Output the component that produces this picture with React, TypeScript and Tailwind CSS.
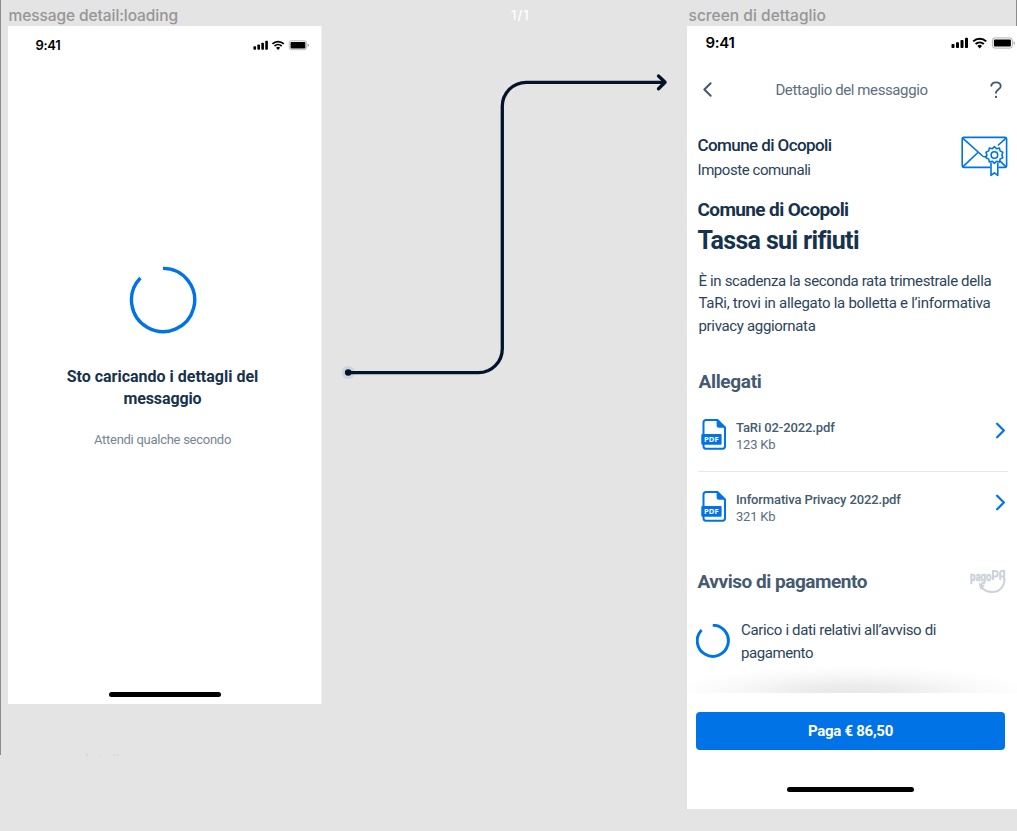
import { ChevronLeft, ChevronRight } from "lucide-react";

function StatusIcons({ className }: { className: string }) {
  return (
    <svg viewBox="0 0 64 12" className={className} fill="#000">
      <rect x="0.5" y="7" width="3" height="4" rx="0.8" />
      <rect x="5" y="5.2" width="3" height="5.8" rx="0.8" />
      <rect x="9.5" y="3" width="3" height="8" rx="0.8" />
      <rect x="14" y="0.8" width="3" height="10.2" rx="0.8" />
      <g fill="none" stroke="#000" strokeWidth="2">
        <path d="M22.2 4.4a9.4 9.4 0 0 1 13 0" />
        <path d="M24.6 7a6 6 0 0 1 8.2 0" />
      </g>
      <path d="M26.4 8.9a3.4 3.4 0 0 1 4.6 0L28.7 11.4z" />
      <rect x="41.4" y="0.9" width="20" height="10.2" rx="2.6" fill="none" stroke="#000" strokeOpacity="0.3" />
      <rect x="42.9" y="2.4" width="17" height="7.2" rx="1" />
      <path d="M62.6 4.2v3.6a1.9 1.9 0 0 0 0-3.6z" opacity="0.4" />
    </svg>
  );
}

function Spinner({ className, strokeWidth }: { className: string; strokeWidth: number }) {
  return (
    <svg viewBox="0 0 68 68" className={className} fill="none" stroke="#0073e6" strokeWidth={strokeWidth}>
      <path d="M34 2.4A31.6 31.6 0 1 1 11.4 12" />
    </svg>
  );
}

function PdfIcon() {
  return (
    <svg viewBox="0 0 26 31" className="mt-[19px] h-[31px] w-[26px] shrink-0">
      <path
        d="M16.5 1H4.9A2.4 2.4 0 0 0 2.5 3.4v23.9a2.4 2.4 0 0 0 2.4 2.4h16.7a2.4 2.4 0 0 0 2.4-2.4V8.5z"
        fill="#fff"
        stroke="#0073e6"
        strokeWidth="2"
      />
      <path d="M15.6 0.2L25 8.8h-7a2.4 2.4 0 0 1-2.4-2.4z" fill="#0073e6" />
      <rect x="0.3" y="15" width="20.3" height="10.8" rx="1" fill="#0073e6" />
      <text x="3" y="23.1" fontSize="7.4" fontWeight="700" textLength="14.6" lengthAdjust="spacingAndGlyphs" fill="#fff" className="font-['Open_Sans',sans-serif]">
        PDF
      </text>
    </svg>
  );
}

function EnvelopeIcon() {
  return (
    <svg
      viewBox="0 0 48 42"
      className="mt-0.5 h-[42px] w-[48px]"
      fill="none"
      stroke="#0073e6"
      strokeWidth="1.6"
      strokeLinejoin="round"
      strokeLinecap="round"
    >
      <path d="M30 32.4H3.8A1.6 1.6 0 0 1 2.2 30.8V4A1.6 1.6 0 0 1 3.8 2.4h41.2A1.6 1.6 0 0 1 46.6 4v26.8a1.6 1.6 0 0 1-1.6 1.6h-6" />
      <path d="M2.7 3.2l19.9 17.8q1.8 1.5 4 .2M46 3.2l-7.6 6.8M2.8 31.8l15.1-14.3M46 31.8l-5.6-5.4" />
      <path d="M34.4 11.6l2.1 2.1 2.9-.7.7 2.9 2.7 1.3-.9 2.8.9 2.8-2.7 1.3-.7 2.9-2.9-.7-2.1 2.1-2.1-2.1-2.9.7-.7-2.9-2.7-1.3.9-2.8-.9-2.8 2.7-1.3.7-2.9 2.9.7z" fill="#fff" />
      <circle cx="34.4" cy="20" r="3.3" />
      <path d="M31 28v12.4l3.4-2.5 3.4 2.5V28" />
    </svg>
  );
}

function PagoPaLogo() {
  return (
    <svg viewBox="0 0 37 25" className="h-[25px] w-[37px]">
      <text
        x="1"
        y="11.5"
        fontSize="12.5"
        fontWeight="800"
        textLength="21.5"
        lengthAdjust="spacingAndGlyphs"
        fill="#cbd3db"
        stroke="#cbd3db"
        strokeWidth="0.4"
        className="font-['Roboto',sans-serif]"
      >
        pago
      </text>
      <g fill="none" stroke="#cbd3db" strokeWidth="2">
        <path d="M24 11V2h2.6q2 0 2 2v1.4q0 2-2 2H24M31.2 11V4q0-2 2-2h2v9M31.2 7.4h4" />
        <path d="M35.4 9.500c.4 8.500-5.400 13.500-12.400 13.500-5 0-8.600-2-11.200-5.600" />
      </g>
      <path d="M9.6 13.8l6.2 2.8-4.4 4.2z" fill="#cbd3db" />
    </svg>
  );
}

function Attachment({ name, size, nameClass, last }: { name: string; size: string; nameClass: string; last?: boolean }) {
  return (
    <li className={last ? "flex h-[72px]" : "flex h-[72px] border-b border-[#e5e8ec]"}>
      <div className="ml-[3px]">
        <PdfIcon />
      </div>
      <div className="ml-[9.5px] mt-[18.5px] grow text-[13px] leading-[17px] text-[#435a70]">
        <p className={nameClass}>{name}</p>
        <p className="tracking-[-0.2px] text-[#5c6f82]">{size}</p>
      </div>
      <ChevronRight className="-mr-1.5 mt-[17px] size-[27px] text-[#0073e6]" strokeWidth={2} />
    </li>
  );
}

function LoadingScreen() {
  return (
    <section className="absolute left-2 top-[26px] flex h-[678px] w-[314px] flex-col items-center border-r border-[#eee] bg-white">
      <header className="flex h-[39px] w-full items-center justify-between pl-[27.5px] pr-[12px]">
        <span className="font-['Inter',sans-serif] text-[13px] font-semibold tracking-[-0.3px] text-black">9:41</span>
        <StatusIcons className="h-[10.5px] w-[56px]" />
      </header>
      <Spinner className="ml-[-3.5px] mt-[201px] size-[68px]" strokeWidth={3.4} />
      <h1 className="mr-1 mt-8 text-center text-[16px] font-bold leading-[22px] text-[#17324d]">
        <span className="block">Sto caricando i dettagli del</span>
        <span className="block tracking-[-0.1px]">messaggio</span>
      </h1>
      <p className="mr-1 mt-[19px] text-[13px] leading-[22px] tracking-[-0.27px] text-[#768594]">Attendi qualche secondo</p>
      <div className="mb-[7.5px] mt-auto h-[4.5px] w-[112px] rounded-full bg-black" />
    </section>
  );
}

function DetailScreen() {
  return (
    <section className="absolute left-[687px] top-[26px] flex h-[783px] w-[330px] flex-col bg-white text-[#17324d]">
      <header className="flex h-[33px] items-center justify-between pl-[18.5px] pt-px">
        <span className="font-['Inter',sans-serif] text-[15px] font-semibold tracking-[-0.3px] text-black">9:41</span>
        <StatusIcons className="mr-0.5 h-[12px] w-[64px]" />
      </header>
      <nav className="flex h-[61px] items-center justify-between pl-[8px] pr-[15px]">
        <ChevronLeft className="size-[25px] text-[#435a70]" strokeWidth={2} />
        <h2 className="-ml-[7px] pt-px text-[15px] tracking-[-0.4px] text-[#5c6f82]">Dettaglio del messaggio</h2>
        <svg viewBox="0 0 12 18" className="h-[18px] w-[12px]" fill="none" stroke="#435a70" strokeWidth="1.9" strokeLinecap="round">
          <path d="M1.3 4.7C1.8 2.4 3.6 1.4 6 1.4c2.7 0 4.7 1.4 4.7 3.8 0 3.4-4.7 3.2-4.7 6.6" />
          <circle cx="6" cy="15.9" r="0.6" fill="#435a70" strokeWidth="1.1" />
        </svg>
      </nav>

      <div className="flex justify-between pl-[10.5px] pr-[9.5px] pt-[13px]">
        <div className="leading-[25px]">
          <p className="text-[17px] font-medium tracking-[-0.59px]">Comune di Ocopoli</p>
          <p className="text-[15px] tracking-[-0.44px] text-[#2b445c]">Imposte comunali</p>
        </div>
        <EnvelopeIcon />
      </div>

      <div className="ml-[10.5px] mt-[13px]">
        <p className="text-[19px] font-bold leading-[28px] tracking-[-0.62px]">Comune di Ocopoli</p>
        <h1 className="pt-px text-[25px] font-bold leading-[32px] tracking-[-0.65px]">Tassa sui rifiuti</h1>
      </div>
      <p className="ml-[11.5px] mt-[12.5px] h-[68px] whitespace-nowrap text-[15px] leading-[22.7px] text-[#2b445c]">
        <span className="block tracking-[-0.35px]">È in scadenza la seconda rata trimestrale della</span>
        <span className="block tracking-[-0.26px]">TaRi, trovi in allegato la bolletta e l’informativa</span>
        <span className="block tracking-[-0.33px]">privacy aggiornata</span>
      </p>

      <h3 className="ml-[11.5px] mt-[30.5px] text-[19px] font-bold leading-[28px] tracking-[-0.32px] text-[#435a70]">Allegati</h3>
      <ul className="ml-[10.5px] mr-[9px] mt-1">
        <Attachment name="TaRi 02-2022.pdf" size="123 Kb" nameClass="font-medium tracking-[-0.11px]" />
        <Attachment name="Informativa Privacy 2022.pdf" size="321 Kb" nameClass="font-medium tracking-[-0.13px]" last />
      </ul>

      <div className="ml-[10.5px] mr-[11px] mt-[23.5px] flex h-[28px] items-center justify-between">
        <h3 className="text-[19px] font-bold leading-[28px] tracking-[-0.47px] text-[#435a70]">Avviso di pagamento</h3>
        <PagoPaLogo />
      </div>
      <div className="ml-[9px] mt-[23.5px] flex gap-[11.5px]">
        <Spinner className="mt-[5px] size-[33.5px]" strokeWidth={6} />
        <p className="whitespace-nowrap text-[15px] leading-[22.8px] text-[#2b445c]">
          <span className="block tracking-[-0.34px]">Carico i dati relativi all’avviso di</span>
          <span className="block tracking-[-0.43px]">pagamento</span>
        </p>
      </div>

      <div className="mt-auto h-[28px] bg-[radial-gradient(56%_100%_at_50%_100%,rgba(0,0,0,0.095),rgba(0,0,0,0.07)_30%,rgba(0,0,0,0.03)_60%,rgba(0,0,0,0.01)_82%,transparent)]" />
      <footer className="flex h-[116px] flex-col items-center pl-[9px] pr-[12px] pt-[19px]">
        <button className="h-[38px] w-full rounded-[4px] bg-[#0073e6] pt-px text-[15px] font-bold tracking-[-0.28px] text-white">
          Paga € 86,50
        </button>
        <div className="mb-[17px] mt-auto h-[5px] w-[127px] rounded-full bg-black" />
      </footer>
    </section>
  );
}

export default function App() {
  return (
    <main className="relative h-[831px] w-[1017px] overflow-hidden bg-[#e4e4e4] font-['Roboto',sans-serif]">
      <div className="absolute left-0 top-0 h-[755px] w-px bg-[#8c8c8c]" />
      <div className="absolute right-0 top-0 h-[26px] w-px bg-[#8c8c8c]" />
      <div className="font-['Inter',sans-serif] text-[15.5px] font-medium leading-[20px] text-[#969696]">
        <span className="absolute left-[8.5px] top-1.5 tracking-[-0.08px]">message detail:loading</span>
        <span className="absolute left-[688.5px] top-1.5 tracking-[0.03px]">screen di dettaglio</span>
        <span className="absolute left-[511px] top-[5px] text-[13px] tracking-[1px] text-white">1/1</span>
      </div>
      <LoadingScreen />
      <DetailScreen />

      <svg viewBox="0 0 345 330" className="absolute left-[335px] top-[60px] h-[330px] w-[345px]" fill="none">
        <circle cx="13.2" cy="312.5" r="6.6" fill="#cdd4de" />
        <circle cx="13.2" cy="312.5" r="3.3" fill="#03132b" />
        <path d="M13 312.7H143.5A24 24 0 0 0 167.3 288.7V46.5A24 24 0 0 1 191.3 22.3H330" stroke="#03132b" strokeWidth="3.3" />
        <path d="M323.5 16l6.6 6.3-6.6 6.5" stroke="#03132b" strokeWidth="3.3" strokeLinecap="round" strokeLinejoin="round" />
      </svg>
      <svg viewBox="0 0 40 2" className="absolute left-[84px] top-[754px] h-[2px] w-[40px]" fill="#cbcbcb">
        <path d="M2 .5h2v1h-2zM16 1h1.5v.5h-1.5zM29.5 .5h2v1h-2zM33.5 .5h1.5v1h-1.5z" />
      </svg>
    </main>
  );
}
